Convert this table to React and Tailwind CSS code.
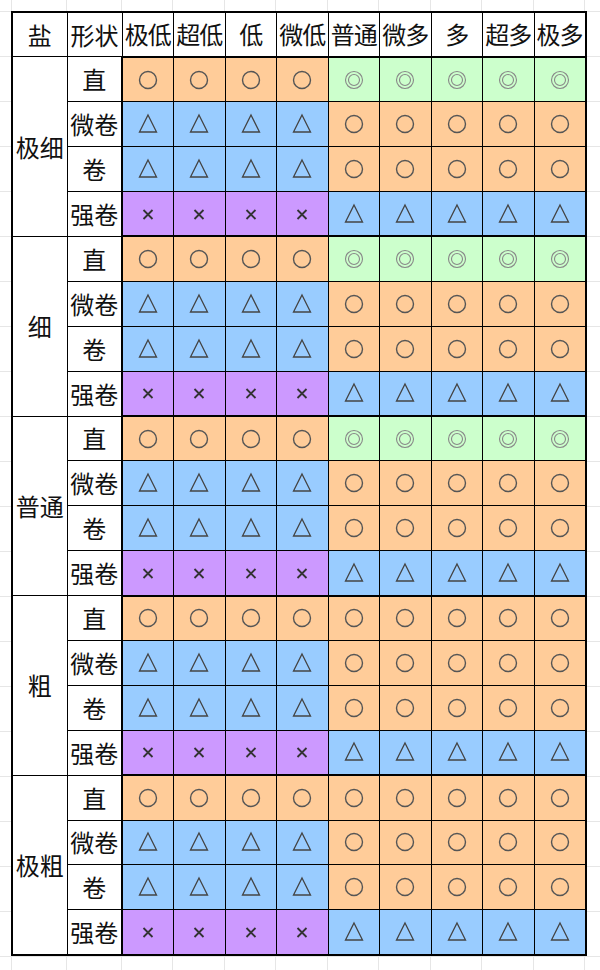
import React from 'react';

const COLS = ['极低', '超低', '低', '微低', '普通', '微多', '多', '超多', '极多'];
const SHAPES = ['直', '微卷', '卷', '强卷'];

const BG = {
  o: 'bg-[#ffcc99]',
  g: 'bg-[#ccffcc]',
  b: 'bg-[#99ccff]',
  p: 'bg-[#cc99ff]',
};

// which colour/symbol a row gets: [first 4 columns, last 5 columns]
const thinRows = [
  ['o', 'g'],
  ['b', 'o'],
  ['b', 'o'],
  ['p', 'b'],
];
const thickRows = [
  ['o', 'o'],
  ['b', 'o'],
  ['b', 'o'],
  ['p', 'b'],
];

const GROUPS = [
  { name: '极细', rows: thinRows },
  { name: '细', rows: thinRows },
  { name: '普通', rows: thinRows },
  { name: '粗', rows: thickRows },
  { name: '极粗', rows: thickRows },
];

const Mark = ({ kind }) => {
  if (kind === 'o')
    return (
      <svg width="22" height="22" viewBox="0 0 22 22" className="mx-auto block">
        <circle cx="11" cy="11" r="8.5" fill="none" stroke="#555" strokeWidth="1.4" />
      </svg>
    );
  if (kind === 'g')
    return (
      <svg width="22" height="22" viewBox="0 0 22 22" className="mx-auto block">
        <circle cx="11" cy="11" r="8.5" fill="none" stroke="#888" strokeWidth="1.1" />
        <circle cx="11" cy="11" r="5.5" fill="none" stroke="#888" strokeWidth="1.1" />
      </svg>
    );
  if (kind === 'b')
    return (
      <svg width="22" height="22" viewBox="0 0 22 22" className="mx-auto block">
        <polygon points="11,2 19.5,19 2.5,19" fill="none" stroke="#444" strokeWidth="1.3" strokeLinejoin="miter" />
      </svg>
    );
  return (
    <svg width="22" height="22" viewBox="0 0 22 22" className="mx-auto block">
      <path d="M6.5 7 L15.5 16 M15.5 7 L6.5 16" stroke="#333" strokeWidth="1.8" />
    </svg>
  );
};

export default function App() {
  return (
    <div
      className="w-[600px] min-h-[970px] bg-white pt-[11px] pl-[11px] font-['Noto_Sans_CJK_SC','Noto_Sans',sans-serif] text-[#111]
        bg-[linear-gradient(to_bottom,#e6e6e6_1px,transparent_1px),linear-gradient(to_right,transparent_11px,#e6e6e6_11px,#e6e6e6_12px,transparent_12px,transparent_66px,#e6e6e6_66px,#e6e6e6_67px,transparent_67px,transparent_121px,#e6e6e6_121px,#e6e6e6_122px,transparent_122px,transparent_172px,#e6e6e6_172px,#e6e6e6_173px,transparent_173px,transparent_224px,#e6e6e6_224px,#e6e6e6_225px,transparent_225px,transparent_275px,#e6e6e6_275px,#e6e6e6_276px,transparent_276px,transparent_327px,#e6e6e6_327px,#e6e6e6_328px,transparent_328px,transparent_378px,#e6e6e6_378px,#e6e6e6_379px,transparent_379px,transparent_430px,#e6e6e6_430px,#e6e6e6_431px,transparent_431px,transparent_481px,#e6e6e6_481px,#e6e6e6_482px,transparent_482px,transparent_533px,#e6e6e6_533px,#e6e6e6_534px,transparent_534px,transparent_584px,#e6e6e6_584px,#e6e6e6_585px,transparent_585px)]
        bg-[size:100%_45px,100%_100%] bg-[position:0_11px,0_0]"
    >
      <table className="table-fixed border-collapse w-[574px] text-[24px] leading-none">
        <colgroup>
          <col className="w-[55px]" />
          <col className="w-[55px]" />
          {COLS.map((c) => (
            <col key={c} className="w-[51.5px]" />
          ))}
        </colgroup>
        <thead>
          <tr className="h-[44.9px]">
            <th className="bg-white font-normal border border-black border-l-2 border-t-2 p-0 whitespace-nowrap">盐</th>
            <th className="bg-white font-normal border border-black border-t-2 p-0 whitespace-nowrap">形状</th>
            {COLS.map((c, i) => (
              <th
                key={c}
                className={`bg-white font-normal border border-black border-t-2 border-b-2 p-0 whitespace-nowrap tracking-[-1px] ${
                  i === COLS.length - 1 ? 'border-r-2' : ''
                }`}
              >
                {c}
              </th>
            ))}
          </tr>
        </thead>
        <tbody>
          {GROUPS.map((g, gi) =>
            g.rows.map((r, ri) => (
              <tr key={g.name + ri} className="h-[44.9px]">
                {ri === 0 && (
                  <td
                    rowSpan={4}
                    className={`bg-white border border-black border-l-2 p-0 text-center whitespace-nowrap ${
                      gi === GROUPS.length - 1 ? 'border-b-2' : ''
                    }`}
                  >
                    {g.name}
                  </td>
                )}
                <td
                  className={`bg-white border border-black p-0 text-center whitespace-nowrap ${
                    gi === GROUPS.length - 1 && ri === 3 ? 'border-b-2' : ''
                  }`}
                >
                  {SHAPES[ri]}
                </td>
                {COLS.map((c, ci) => {
                  const kind = ci < 4 ? r[0] : r[1];
                  return (
                    <td
                      key={c}
                      className={`${BG[kind]} border border-black p-0 text-center ${ci === 0 ? 'border-l-2' : ''} ${
                        ci === COLS.length - 1 ? 'border-r-2' : ''
                      } ${ri === 0 ? 'border-t-2' : ''} ${gi === GROUPS.length - 1 && ri === 3 ? 'border-b-2' : ''}`}
                    >
                      <Mark kind={kind} />
                    </td>
                  );
                })}
              </tr>
            ))
          )}
        </tbody>
      </table>
    </div>
  );
}
